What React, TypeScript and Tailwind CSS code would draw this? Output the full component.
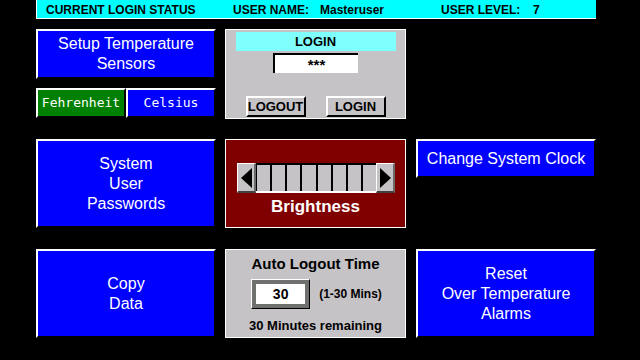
import React from "react";

const bevel =
  "border-2 border-t-white border-l-white border-r-black border-b-black";

interface BlueButtonProps {
  lines: string[];
  className: string;
}

const BlueButton: React.FC<BlueButtonProps> = ({ lines, className }) => (
  <div
    className={`${bevel} bg-[#0000ff] flex flex-col items-center justify-center text-white text-[16px] leading-[20px] ${className}`}
  >
    {lines.map((l) => (
      <span key={l}>{l}</span>
    ))}
  </div>
);

const ArrowBtn: React.FC<{ dir: "left" | "right" }> = ({ dir }) => (
  <div className="w-[19px] h-[30px] bg-[#c6c3c6] border-t border-l border-white border-r-2 border-b-2 border-r-[#6b6b6b] border-b-[#404040] flex items-center justify-center">
    <svg width="11" height="20" viewBox="0 0 11 20">
      {dir === "left" ? (
        <polygon points="11,0 11,20 0,10" fill="#000" />
      ) : (
        <polygon points="0,0 0,20 11,10" fill="#000" />
      )}
    </svg>
  </div>
);

const GrayButton: React.FC<{ label: string }> = ({ label }) => (
  <div
    className={`${bevel} w-[60px] h-[21px] bg-[#c6c3c6] flex items-center justify-center text-[13px] font-bold text-black leading-none`}
  >
    {label}
  </div>
);

const App: React.FC = () => {
  const cells = [0, 1, 2, 3, 4, 5, 6, 7];

  return (
    <div className="w-[640px] h-[360px] bg-black overflow-hidden font-['Liberation_Sans',Arial,sans-serif]">
      {/* status bar */}
      <div className="ml-[36px] w-[560px] h-[19px] bg-[#00ffff] border-l border-b border-white flex items-center text-[12px] font-bold text-black leading-none pt-[1px]">
        <span className="ml-[9px] w-[187px]">CURRENT LOGIN STATUS</span>
        <span className="w-[87px]">USER NAME:</span>
        <span className="w-[121px]">Masteruser</span>
        <span className="w-[92px]">USER LEVEL:</span>
        <span>7</span>
      </div>

      {/* row 1 */}
      <div className="flex mt-[10px] ml-[36px] h-[90px]">
        <div className="w-[180px] flex flex-col">
          <BlueButton
            lines={["Setup Temperature", "Sensors"]}
            className="h-[50px]"
          />
          <div className="flex mt-[9px] h-[30px] font-['DejaVu_Sans_Mono',monospace] text-[13px] text-white">
            <div
              className={`${bevel} w-[90px] bg-[#008000] flex items-center justify-center`}
            >
              Fehrenheit
            </div>
            <div
              className={`${bevel} w-[90px] bg-[#0000ff] flex items-center justify-center`}
            >
              Celsius
            </div>
          </div>
        </div>

        <div className="ml-[9px] w-[181px] h-[90px] border border-white bg-[#c6c3c6] flex flex-col items-center pt-[2px]">
          <div className="w-[160px] h-[19px] bg-[#80ffff] flex items-center justify-center text-[13px] font-bold text-black">
            LOGIN
          </div>
          <div className="mt-[2px] w-[85px] h-[20px] bg-white border-t-2 border-l-2 border-black flex items-center justify-center text-[15px] font-bold text-black pt-[3px]">
            ***
          </div>
          <div className="mt-[23px] flex gap-[20px]">
            <GrayButton label="LOGOUT" />
            <GrayButton label="LOGIN" />
          </div>
        </div>
      </div>

      {/* row 2 */}
      <div className="flex mt-[20px] ml-[36px] items-start">
        <BlueButton
          lines={["System", "User", "Passwords"]}
          className="w-[180px] h-[89px]"
        />

        <div className="ml-[9px] w-[181px] h-[89px] border border-white bg-[#800000] flex flex-col pt-[23px]">
          <div className="ml-[11px] w-[158px] h-[30px] flex">
            <ArrowBtn dir="left" />
            <div className="flex-1 flex flex-col">
              <div className="h-[2px] bg-black" />
              <div className="flex-1 flex gap-[2px] bg-black pl-[1px]">
                {cells.map((c) => (
                  <div key={c} className="flex-1 bg-[#c6c3c6]" />
                ))}
              </div>
              <div className="h-[2px] bg-white" />
            </div>
            <ArrowBtn dir="right" />
          </div>
          <div className="mt-[4px] text-center text-white font-bold text-[17px] leading-[20px]">
            Brightness
          </div>
        </div>

        <BlueButton
          lines={["Change System Clock"]}
          className="ml-[10px] w-[180px] h-[39px]"
        />
      </div>

      {/* row 3 */}
      <div className="flex mt-[21px] ml-[36px]">
        <BlueButton lines={["Copy", "Data"]} className="w-[180px] h-[89px]" />

        <div className="ml-[9px] w-[181px] h-[89px] border border-white bg-[#c6c3c6] flex flex-col items-center pt-[5px] font-bold text-black">
          <div className="text-[15px] leading-[18px]">Auto Logout Time</div>
          <div className="flex items-center mt-[6px] ml-[2px]">
            <div className="w-[59px] h-[30px] border border-t-white border-l-white border-r-black border-b-black bg-[#6f716f] p-[4px]">
              <div className="bg-white h-full flex items-center justify-center text-[14px]">
                30
              </div>
            </div>
            <span className="ml-[9px] text-[12px]">(1-30 Mins)</span>
          </div>
          <div className="mt-[9px] text-[13px] leading-[16px]">
            30 Minutes remaining
          </div>
        </div>

        <BlueButton
          lines={["Reset", "Over Temperature", "Alarms"]}
          className="ml-[10px] w-[180px] h-[89px]"
        />
      </div>
    </div>
  );
};

export default App;
